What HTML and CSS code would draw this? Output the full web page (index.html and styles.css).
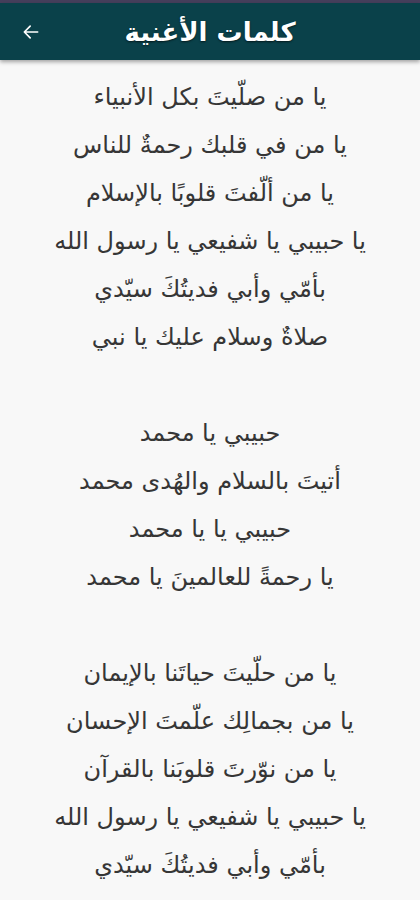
FILE: index.html
```html
<!DOCTYPE html>
<html lang="ar" dir="rtl">
<head>
<meta charset="utf-8">
<title>كلمات الأغنية</title>
<link rel="stylesheet" href="styles.css">
</head>
<body>
<div class="status"></div>
<header class="bar">
  <h1 class="title">كلمات الأغنية</h1>
  <span class="back">
    <svg width="20" height="20" viewBox="0 0 24 24"><path d="M20 12H4M11 5l-7 7 7 7" fill="none" stroke="#fff" stroke-width="2" stroke-linecap="round" stroke-linejoin="round"/></svg>
  </span>
</header>
<main class="lyrics">
  <p>يا من صلّيتَ بكل الأنبياء</p>
  <p>يا من في قلبك رحمةٌ للناس</p>
  <p>يا من ألّفتَ قلوبًا بالإسلام</p>
  <p>يا حبيبي يا شفيعي يا رسول الله</p>
  <p>بأمّي وأبي فديتُكَ سيّدي</p>
  <p>صلاةٌ وسلام عليك يا نبي</p>
  <p class="gap"></p>
  <p>حبيبي يا محمد</p>
  <p>أتيتَ بالسلام والهُدى محمد</p>
  <p>حبيبي يا يا محمد</p>
  <p>يا رحمةً للعالمينَ يا محمد</p>
  <p class="gap"></p>
  <p>يا من حلّيتَ حياتَنا بالإيمان</p>
  <p>يا من بجمالِك علّمتَ الإحسان</p>
  <p>يا من نوّرتَ قلوبَنا بالقرآن</p>
  <p>يا حبيبي يا شفيعي يا رسول الله</p>
  <p>بأمّي وأبي فديتُكَ سيّدي</p>
  <p>صلاةٌ وسلام عليك يا نبي</p>
</main>
</body>
</html>
```
FILE: styles.css
```css
html, body {
  margin: 0;
  padding: 0;
  background: #f8f8f8;
}
body {
  width: 420px;
  height: 900px;
  overflow: hidden;
  font-family: "DejaVu Sans", "Noto Sans", sans-serif;
}
.status {
  height: 3px;
  background: #463f5c;
}
.bar {
  height: 57px;
  background: #0a414a;
  display: flex;
  align-items: center;
  justify-content: center;
  position: relative;
  box-shadow: 0 2px 4px rgba(0,0,0,0.35);
  z-index: 1;
}
.title {
  margin: 0;
  color: #fff;
  font-size: 26px;
  font-weight: bold;
  text-shadow: 0 1px 2px rgba(0,0,0,0.6);
}
.back {
  position: absolute;
  left: 21px;
  top: 19px;
  display: flex;
}
.lyrics {
  padding-top: 13px;
  text-align: center;
  color: #363636;
  font-size: 24px;
}
.lyrics p {
  margin: 0;
  height: 48px;
  line-height: 48px;
  white-space: nowrap;
}
```
